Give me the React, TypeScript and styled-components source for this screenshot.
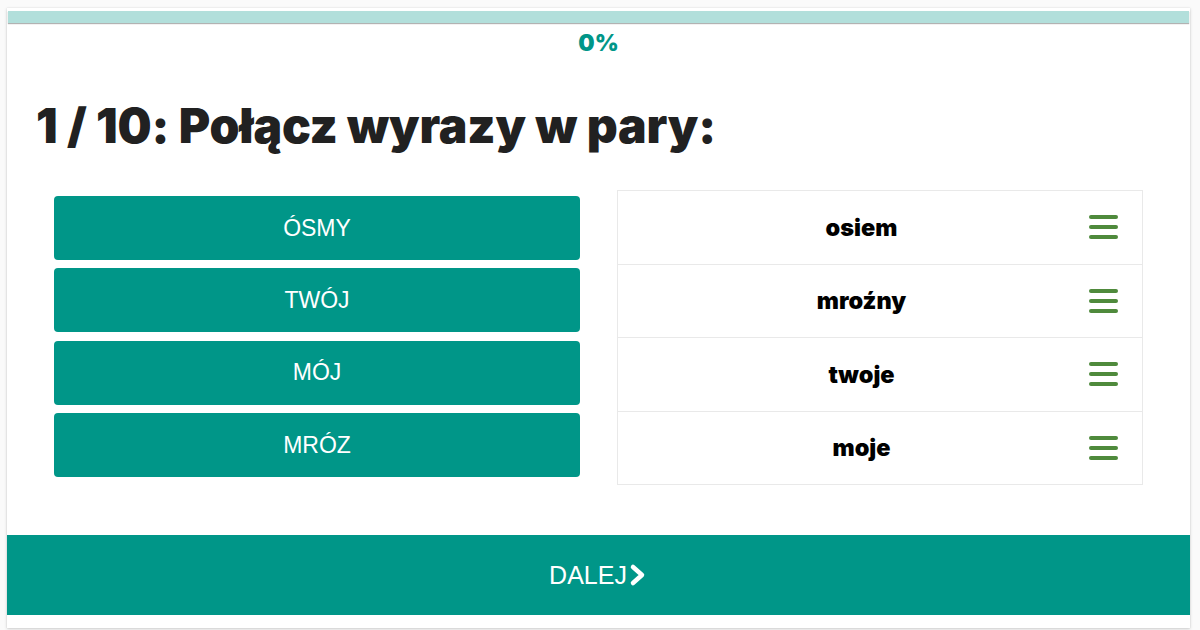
import React from "react";
import styled, { createGlobalStyle } from "styled-components";

const GlobalStyle = createGlobalStyle`
  html, body {
    margin: 0;
    padding: 0;
    background: #fafafa;
  }
  body {
    font-family: "Liberation Sans", Arial, sans-serif;
  }
`;

const Page = styled.div`
  padding: 8px 10px 2px 7px;
  height: 630px;
  box-sizing: border-box;
`;

const Card = styled.div`
  background: #fff;
  height: 620px;
  box-sizing: border-box;
  padding-top: 3px;
  display: flex;
  flex-direction: column;
  box-shadow: 0 1px 3px rgba(0, 0, 0, 0.18), 0 0 1px rgba(0, 0, 0, 0.12);
`;

const ProgressTrack = styled.div`
  height: 12px;
  margin: 0 1px;
  background: #b2dfdb;
  box-shadow: 0 1px 1px rgba(0, 0, 0, 0.3);
`;

const ProgressLabel = styled.div`
  text-align: center;
  font-family: Inter, "Liberation Sans", sans-serif;
  font-weight: 900;
  font-size: 23px;
  color: #009688;
  margin-top: 7px;
  line-height: 26px;
`;

const Title = styled.h1`
  margin: 40px 0 0 29px;
  font-family: Inter, "Liberation Sans", sans-serif;
  font-weight: 900;
  font-size: 48px;
  letter-spacing: -0.15px;
  line-height: 60px;
  color: #212121;
`;

const Board = styled.div`
  display: grid;
  grid-template-columns: 526px 526px;
  column-gap: 37px;
  margin: 34px 0 0 47px;
  align-items: start;
`;

const LeftColumn = styled.div`
  display: flex;
  flex-direction: column;
  gap: 8.4px;
  padding-top: 6px;
`;

const WordButton = styled.div`
  height: 64px;
  border-radius: 4px;
  background: #009688;
  color: #fff;
  font-size: 23px;
  display: flex;
  align-items: center;
  justify-content: center;
`;

const RightList = styled.div`
  border: 1px solid #e9e9e9;
`;

const Row = styled.div`
  height: 72.5px;
  display: flex;
  align-items: center;
  padding: 0 24px 0 16px;
  & + & {
    border-top: 1px solid #e9e9e9;
  }
`;

const RowWord = styled.div`
  flex: 1;
  text-align: center;
  font-family: Inter, "Liberation Sans", sans-serif;
  font-weight: 900;
  font-size: 23.5px;
  color: #000;
`;

const Handle = styled.div`
  width: 29px;
  display: flex;
  flex-direction: column;
  gap: 6px;
  span {
    display: block;
    height: 4px;
    border-radius: 2px;
    background: #4f8a3c;
  }
`;

const Spacer = styled.div`
  flex: 1;
`;

const NextBar = styled.div`
  height: 80px;
  margin-bottom: 13px;
  background: #009688;
  color: #fff;
  font-size: 25px;
  display: flex;
  align-items: center;
  justify-content: center;
  gap: 1px;
`;

const left = ["ÓSMY", "TWÓJ", "MÓJ", "MRÓZ"];
const right = ["osiem", "mroźny", "twoje", "moje"];

export default function App() {
  return (
    <>
      <GlobalStyle />
      <Page>
        <Card>
          <ProgressTrack />
          <ProgressLabel>0%</ProgressLabel>
          <Title>1 / 10: Połącz wyrazy w pary:</Title>
          <Board>
            <LeftColumn>
              {left.map((w) => (
                <WordButton key={w}>{w}</WordButton>
              ))}
            </LeftColumn>
            <RightList>
              {right.map((w) => (
                <Row key={w}>
                  <RowWord>{w}</RowWord>
                  <Handle>
                    <span />
                    <span />
                    <span />
                  </Handle>
                </Row>
              ))}
            </RightList>
          </Board>
          <Spacer />
          <NextBar>
            DALEJ
            <svg width="20" height="24" viewBox="0 0 20 24">
              <path d="M5 4 L14 12 L5 20" fill="none" stroke="#fff" strokeWidth="4.5" strokeLinecap="round" strokeLinejoin="round" />
            </svg>
          </NextBar>
        </Card>
      </Page>
    </>
  );
}
